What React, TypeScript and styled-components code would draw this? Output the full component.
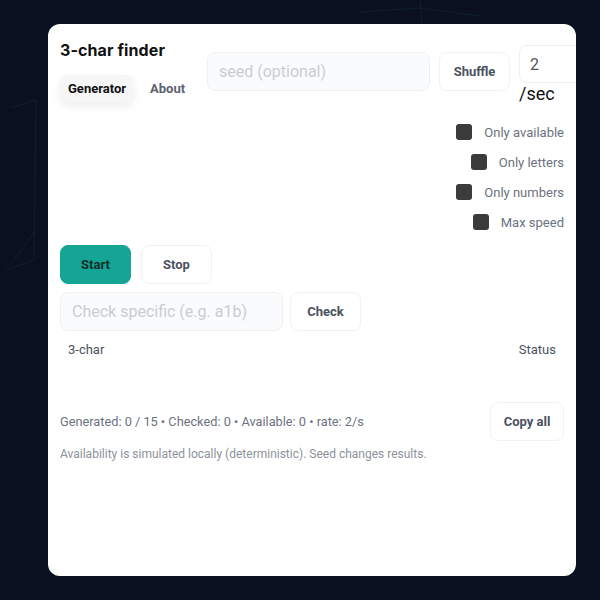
import styled, { createGlobalStyle } from "styled-components";

const GlobalStyle = createGlobalStyle`
  html, body {
    margin: 0;
    padding: 0;
    background: #0b1020;
  }
  * {
    box-sizing: border-box;
  }
`;

const Page = styled.div`
  position: relative;
  width: 600px;
  height: 600px;
  padding: 24px 24px 24px 48px;
  background: #0b1020;
  overflow: hidden;
  font-family: Roboto, "Liberation Sans", sans-serif;
`;

const Backdrop = styled.svg`
  position: absolute;
  inset: 0;
  width: 600px;
  height: 600px;
  pointer-events: none;
`;

const Card = styled.main`
  position: relative;
  width: 528px;
  height: 552px;
  background: #fff;
  border-radius: 12px;
  padding: 13px 12px 12px 12px;
  overflow: hidden;
  display: flex;
  flex-direction: column;
`;

const Header = styled.div`
  display: flex;
  align-items: center;
  gap: 9px;
  white-space: nowrap;
`;

const Brand = styled.div`
  display: flex;
  flex-direction: column;
  width: 138px;
  flex-shrink: 0;
`;

const Title = styled.h1`
  margin: 0 0 15px;
  font-family: Inter, Roboto, sans-serif;
  font-size: 16px;
  line-height: 20px;
  font-weight: 700;
  color: #111;
  letter-spacing: 0.1px;
`;

const Tabs = styled.div`
  display: flex;
  gap: 8px;
`;

const Tab = styled.button<{ $active?: boolean }>`
  border: none;
  border-radius: 8px;
  height: 27px;
  padding: 0 8px;
  font-family: Roboto, sans-serif;
  font-size: 13px;
  font-weight: 700;
  color: ${({ $active }) => ($active ? "#111" : "#5b6270")};
  background: ${({ $active }) => ($active ? "#f6f6f6" : "transparent")};
  box-shadow: ${({ $active }) => ($active ? "0 4px 10px rgba(0,0,0,0.07)" : "none")};
`;

const TextInput = styled.input<{ $width: number }>`
  width: ${({ $width }) => $width}px;
  height: 39px;
  flex-shrink: 0;
  border: 1px solid #eef0f3;
  border-radius: 8px;
  background: #fafbfc;
  padding: 0 11px;
  font-family: Roboto, sans-serif;
  font-size: 16px;
  color: #222;
  outline: none;
  &::placeholder {
    color: #c9cdd3;
  }
`;

const Button = styled.button<{ $width?: number }>`
  height: 39px;
  flex-shrink: 0;
  width: ${({ $width }) => ($width ? `${$width}px` : "auto")};
  padding: 0;
  white-space: nowrap;
  border: 1px solid #f1f2f4;
  border-radius: 8px;
  background: #fff;
  font-family: Roboto, sans-serif;
  font-size: 13px;
  font-weight: 700;
  color: #4b5260;
`;

const PrimaryButton = styled(Button)`
  border-color: #14a595;
  background: #14a595;
  color: #0d2e2a;
`;

const RateGroup = styled.div`
  display: flex;
  flex-direction: column;
  margin-top: 8px;
`;

const NumberInput = styled.input`
  width: 80px;
  height: 38px;
  border: 1px solid #eef0f3;
  border-radius: 8px;
  background: #fff;
  padding: 0 10px;
  font-family: Roboto, sans-serif;
  font-size: 16px;
  color: #555;
  outline: none;
`;

const Unit = styled.span`
  font-size: 18px;
  line-height: 22px;
  color: #111;
`;

const Options = styled.div`
  display: flex;
  flex-direction: column;
  align-items: flex-end;
  margin-top: 12px;
`;

const Option = styled.label`
  display: flex;
  align-items: center;
  gap: 12px;
  height: 30px;
  font-size: 13px;
  color: #6b7280;
`;

const Box = styled.input`
  appearance: none;
  margin: 0;
  width: 16px;
  height: 16px;
  border-radius: 3px;
  background: #3b3b3b;
`;

const Row = styled.div<{ $gap: number }>`
  display: flex;
  gap: ${({ $gap }) => $gap}px;
  margin-top: 8px;
`;

const Table = styled.div`
  display: flex;
  justify-content: space-between;
  padding: 0 8px;
  margin-top: 10px;
  height: 61px;
  font-size: 13px;
  line-height: 18px;
  color: #4b5260;
`;

const Footer = styled.div`
  display: flex;
  align-items: center;
  justify-content: space-between;
`;

const Stats = styled.span`
  font-size: 12.75px;
  white-space: nowrap;
  color: #6b7280;
`;

const Note = styled.p`
  margin: 5px 0 0;
  font-size: 12px;
  line-height: 16px;
  color: #8c929b;
`;

export default function App() {
  return (
    <>
      <GlobalStyle />
      <Page>
        <Backdrop viewBox="0 0 600 600">
          <g stroke="rgba(56,189,178,0.09)" strokeWidth="1" fill="none">
            <polyline points="10,108 36,100 34,260 6,270" />
            <polyline points="36,230 10,265" />
            <polyline points="360,12 420,8 480,16" />
            <polyline points="420,0 422,24" />
          </g>
        </Backdrop>
        <Card>
          <Header>
            <Brand>
              <Title>3-char finder</Title>
              <Tabs>
                <Tab $active>Generator</Tab>
                <Tab>About</Tab>
              </Tabs>
            </Brand>
            <TextInput $width={223} placeholder="seed (optional)" />
            <Button $width={71}>Shuffle</Button>
            <RateGroup>
              <NumberInput type="number" defaultValue={2} />
              <Unit>/sec</Unit>
            </RateGroup>
          </Header>

          <Options>
            <Option>
              <Box type="checkbox" />
              Only available
            </Option>
            <Option>
              <Box type="checkbox" />
              Only letters
            </Option>
            <Option>
              <Box type="checkbox" />
              Only numbers
            </Option>
            <Option>
              <Box type="checkbox" />
              Max speed
            </Option>
          </Options>

          <Row $gap={10}>
            <PrimaryButton $width={71}>Start</PrimaryButton>
            <Button $width={71}>Stop</Button>
          </Row>
          <Row $gap={7}>
            <TextInput $width={223} placeholder="Check specific (e.g. a1b)" />
            <Button $width={71}>Check</Button>
          </Row>

          <Table>
            <span>3-char</span>
            <span>Status</span>
          </Table>

          <Footer>
            <Stats>Generated: 0 / 15 • Checked: 0 • Available: 0 • rate: 2/s</Stats>
            <Button $width={74}>Copy all</Button>
          </Footer>
          <Note>Availability is simulated locally (deterministic). Seed changes results.</Note>
        </Card>
      </Page>
    </>
  );
}
